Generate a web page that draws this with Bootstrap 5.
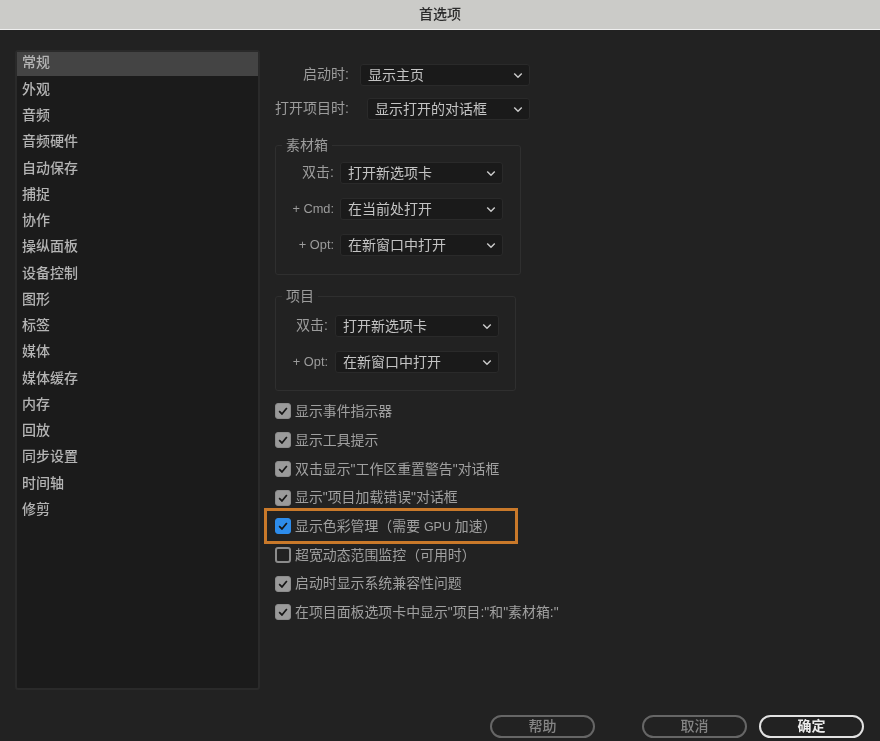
<!DOCTYPE html>
<html lang="zh-CN">
<head>
<meta charset="utf-8">
<title>首选项</title>
<link href="https://cdn.jsdelivr.net/npm/bootstrap@5.3.0/dist/css/bootstrap.min.css" rel="stylesheet">
<script src="https://cdn.jsdelivr.net/npm/bootstrap@5.3.0/dist/js/bootstrap.bundle.min.js"></script>
<style>
html,body{height:741px;overflow:hidden}
body{background:#222222;color:#a8a8a8;font-family:"Liberation Sans","Noto Sans CJK SC",sans-serif;font-size:14px;line-height:1.2}
.pref-win{height:741px;filter:blur(.45px)}
.title-bar{height:30px;background:#cbcbc8;border-bottom:1px solid #efefef;color:#2b2b2b;font-size:14px;font-weight:500}
.pref-main{height:685px;padding:20px 0 0 15px;gap:15px}
.side-list{width:245px;height:640px;background:#1b1b1b;border:2px solid #2a2a2a;border-radius:3px;padding:0;list-style:none;margin:0}
.side-list li{height:26.27px;padding:0 0 4px 5px;display:flex;align-items:center;color:#b4b4b4;font-size:14px;font-weight:500}
.side-list li.on{height:24px;padding-bottom:3px;background:#444444;margin-bottom:2px}
.pref-col{width:300px;padding-top:14px}
.pref-row{display:flex;align-items:center;height:22px}
.lbl{text-align:right;padding-right:11px;padding-bottom:1px;flex:none;white-space:nowrap;color:#9c9c9c;font-size:14px}
.lbl-key{font-size:12.8px}
.pick.form-select{flex:none;height:22px;min-height:0;padding:0 20px 2px 7px;font-size:14px;line-height:20px;color:#c4c4c4;background-color:#1a1a1a;border:1px solid #2a2a2a;border-radius:3px;background-position:right 6px center;background-size:10px 7px;background-image:url("data:image/svg+xml,%3csvg xmlns='http://www.w3.org/2000/svg' viewBox='0 0 11 8'%3e%3cpath fill='none' stroke='%23c8c8c8' stroke-width='1.7' d='M1.2 1.8 5.5 6 9.8 1.8'/%3e%3c/svg%3e");box-shadow:none;font-family:inherit}
.w74{width:74px;padding-right:0;margin-right:18px}.w85{width:85px}.w64{width:64px;padding-right:6px}.w59{width:59px;padding-right:7px}
.s170{width:170px}.s163{width:163px}.s164{width:164px}
.row-second{margin-top:12px}
.group-box{border:1px solid #2f2f2f;border-radius:3px;margin:0}
.group-box legend{float:none;width:auto;font-size:14px;line-height:16px;color:#9c9c9c;margin:-9px 0 0 6px;padding:0 4px;background:#222222}
.box-a{width:246px;height:138px;margin-top:17px}
.box-b{width:241px;height:103px;margin-top:13px}
.box-a .pref-row+.pref-row,.box-b .pref-row+.pref-row{margin-top:14px}
.box-a .rows{padding-top:9px}
.box-b .rows{padding-top:11px}
.checks{margin-top:6px}
.chk-row{display:flex;align-items:center;height:28.75px;gap:4px;color:#a0a0a0;font-size:13.9px;white-space:pre}
.gpu-txt{font-size:12.5px}
.chk-row .form-check-input{flex:none;width:16px;height:16px;margin:0;border-radius:3px;background-color:#9a9a9a;border:1px solid #8c8c8c;box-shadow:none;opacity:1;background-size:14px;background-image:url("data:image/svg+xml,%3csvg xmlns='http://www.w3.org/2000/svg' viewBox='0 0 16 16'%3e%3cpath fill='none' stroke='%23161616' stroke-width='2' d='M3.6 8.2 6.8 11.4 12.4 4.6'/%3e%3c/svg%3e")}
.chk-row .form-check-input.blue{background-color:#2d8ceb;border-color:#2d8ceb}
.chk-row .form-check-input.off{background:transparent;border:2px solid #8c8c8c}
.chk-row.hl{margin:-4px 0 -3.5px -11px;width:254px;height:36px;padding-left:8px;border:3px solid #c9792a}
.pref-foot{height:26px;padding-left:490px}
.foot-btn.btn{width:105px;height:23px;padding:0;font-size:14px;line-height:19px;border-radius:12px;border:2px solid #666666;color:#858585;background:transparent;font-weight:500}
.foot-btn.main-btn{border-color:#e2e2e2;color:#ececec;font-weight:700}
.gap-l{margin-left:47px}.gap-s{margin-left:12px}
</style>
</head>
<body>
<div class="pref-win d-flex flex-column">
  <div class="title-bar d-flex align-items-center justify-content-center">首选项</div>
  <div class="pref-main d-flex">
    <ul class="side-list">
      <li class="on">常规</li><li>外观</li><li>音频</li><li>音频硬件</li><li>自动保存</li><li>捕捉</li><li>协作</li><li>操纵面板</li><li>设备控制</li><li>图形</li><li>标签</li><li>媒体</li><li>媒体缓存</li><li>内存</li><li>回放</li><li>同步设置</li><li>时间轴</li><li>修剪</li>
    </ul>
    <div class="pref-col">
      <div class="pref-row"><span class="lbl w85">启动时:</span><select class="form-select pick s170"><option>显示主页</option></select></div>
      <div class="pref-row row-second"><span class="lbl w74">打开项目时:</span><select class="form-select pick s163"><option>显示打开的对话框</option></select></div>
      <fieldset class="group-box box-a">
        <legend>素材箱</legend>
        <div class="rows">
          <div class="pref-row"><span class="lbl w64">双击:</span><select class="form-select pick s163"><option>打开新选项卡</option></select></div>
          <div class="pref-row"><span class="lbl w64 lbl-key">+ Cmd:</span><select class="form-select pick s163"><option>在当前处打开</option></select></div>
          <div class="pref-row"><span class="lbl w64 lbl-key">+ Opt:</span><select class="form-select pick s163"><option>在新窗口中打开</option></select></div>
        </div>
      </fieldset>
      <fieldset class="group-box box-b">
        <legend>项目</legend>
        <div class="rows">
          <div class="pref-row"><span class="lbl w59">双击:</span><select class="form-select pick s164"><option>打开新选项卡</option></select></div>
          <div class="pref-row"><span class="lbl w59 lbl-key">+ Opt:</span><select class="form-select pick s164"><option>在新窗口中打开</option></select></div>
        </div>
      </fieldset>
      <div class="checks">
        <label class="chk-row"><input type="checkbox" class="form-check-input" checked><span>显示事件指示器</span></label>
        <label class="chk-row"><input type="checkbox" class="form-check-input" checked><span>显示工具提示</span></label>
        <label class="chk-row"><input type="checkbox" class="form-check-input" checked><span>双击显示"工作区重置警告"对话框</span></label>
        <label class="chk-row"><input type="checkbox" class="form-check-input" checked><span>显示"项目加载错误"对话框</span></label>
        <label class="chk-row hl"><input type="checkbox" class="form-check-input blue" checked><span>显示色彩管理（需要 <span class="gpu-txt">GPU</span> 加速）</span></label>
        <label class="chk-row"><input type="checkbox" class="form-check-input off"><span>超宽动态范围监控（可用时）</span></label>
        <label class="chk-row"><input type="checkbox" class="form-check-input" checked><span>启动时显示系统兼容性问题</span></label>
        <label class="chk-row"><input type="checkbox" class="form-check-input" checked><span>在项目面板选项卡中显示"项目:"和"素材箱:"</span></label>
      </div>
    </div>
  </div>
  <div class="pref-foot d-flex">
    <button class="btn foot-btn">帮助</button>
    <button class="btn foot-btn gap-l">取消</button>
    <button class="btn foot-btn main-btn gap-s">确定</button>
  </div>
</div>
</body>
</html>
